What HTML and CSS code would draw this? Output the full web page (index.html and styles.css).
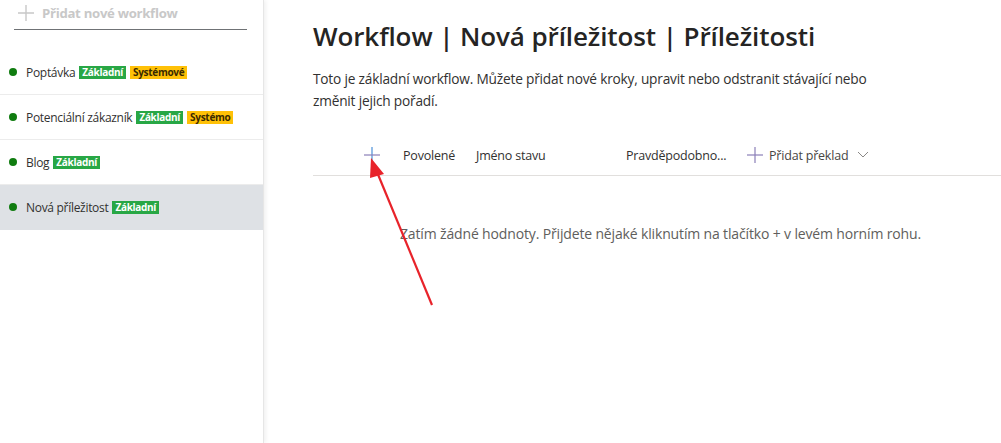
FILE: index.html
```html
<!DOCTYPE html>
<html lang="cs">
<head>
    <meta charset="UTF-8">
    <meta name="viewport" content="width=device-width, initial-scale=1.0">
    <title>Workflow</title>
    <link rel="stylesheet" href="styles.css">
</head>
<body>
    <aside class="sidebar">
        <div class="new-workflow">
            <svg class="plus-icon" width="16" height="16" viewBox="0 0 16 16"><path d="M8 0v16M0 8h16" stroke="#c8c8c8" stroke-width="1.4"/></svg>
            <span>Přidat nové workflow</span>
        </div>
        <ul class="workflow-list">
            <li><span class="dot"></span>Poptávka <span class="badge basic">Základní</span> <span class="badge system">Systémové</span></li>
            <li><span class="dot"></span>Potenciální zákazník <span class="badge basic">Základní</span> <span class="badge system">Systémo</span></li>
            <li><span class="dot"></span>Blog <span class="badge basic">Základní</span></li>
            <li class="active"><span class="dot"></span>Nová příležitost <span class="badge basic">Základní</span></li>
        </ul>
    </aside>
    <main class="content">
        <h1>Workflow | Nová příležitost | Příležitosti</h1>
        <p class="description">Toto je základní workflow. Můžete přidat nové kroky, upravit nebo odstranit stávající nebo změnit jejich pořadí.</p>
        <div class="table-head">
            <span class="col-add"><svg width="16" height="16" viewBox="0 0 16 16"><path d="M8 0v16" stroke="#4a90d9" stroke-width="1.2"/><path d="M0 8h16" stroke="#8a7fb8" stroke-width="1.2"/></svg></span>
            <span class="col-enabled">Povolené</span>
            <span class="col-name">Jméno stavu</span>
            <span class="col-prob">Pravděpodobno...</span>
            <span class="col-translate">
                <svg width="16" height="16" viewBox="0 0 16 16"><path d="M8 0v16" stroke="#8a7fb8" stroke-width="1.2"/><path d="M0 8h16" stroke="#8a7fb8" stroke-width="1.2"/></svg>
                Přidat překlad
                <svg class="chevron" width="12" height="8" viewBox="0 0 12 8"><path d="M1 1l5 5 5-5" fill="none" stroke="#8a8886" stroke-width="1"/></svg>
            </span>
        </div>
        <p class="empty">Zatím žádné hodnoty. Přijdete nějaké kliknutím na tlačítko + v levém horním rohu.</p>
    </main>
    <svg class="arrow" width="1001" height="443" viewBox="0 0 1001 443">
        <path d="M432 305L377 172" stroke="#e8232a" stroke-width="2.2" fill="none"/>
        <path d="M371 158L384 174L370 178Z" fill="#e8232a"/>
    </svg>
</body>
</html>
```

FILE: styles.css
```css
body {
    margin: 0;
    font-family: "Open Sans", "Noto Sans", sans-serif;
    color: #323130;
    background: #fff;
    display: flex;
    height: 443px;
    overflow: hidden;
}

.sidebar {
    width: 263px;
    flex-shrink: 0;
    border-right: 1px solid #e6e6e6;
    box-shadow: 2px 0 4px rgba(0, 0, 0, 0.06);
}

.new-workflow {
    display: flex;
    align-items: center;
    gap: 8px;
    margin: 0 16px 0 14px;
    padding: 4px 0 7px 4px;
    border-bottom: 1px solid #6f7275;
    color: #c8c8c8;
    font-weight: 700;
    font-size: 13.2px;
    letter-spacing: -0.3px;
}

.workflow-list {
    list-style: none;
    margin: 20px 0 0;
    padding: 0;
}

.workflow-list li {
    display: flex;
    align-items: center;
    height: 44px;
    padding-left: 9px;
    border-bottom: 1px solid #ececec;
    font-size: 12px;
    letter-spacing: -0.3px;
    white-space: nowrap;
}

.workflow-list li.active {
    background: #dee1e5;
    border-bottom-color: transparent;
}

.dot {
    width: 8px;
    height: 8px;
    border-radius: 50%;
    background: #107c10;
    margin-right: 9px;
}

.badge {
    font-size: 10px;
    font-weight: 700;
    line-height: 13px;
    padding: 0 3px;
    margin-left: 4px;
    letter-spacing: -0.3px;
}

.badge.basic {
    background: #28a745;
    color: #fff;
}

.badge.system {
    background: #ffc107;
    color: #3a2a00;
}

.content {
    flex: 1;
    padding-left: 49px;
}

h1 {
    margin: 18px 0 0;
    font-size: 26px;
    font-weight: 600;
    letter-spacing: -0.1px;
    color: #252423;
}

.description {
    width: 570px;
    margin: 14px 0 0;
    font-size: 13.7px;
    line-height: 22px;
    letter-spacing: -0.2px;
}

.table-head {
    display: flex;
    align-items: center;
    height: 40px;
    margin-top: 23px;
    border-bottom: 1px solid #e1dfdd;
    font-size: 12.5px;
    letter-spacing: -0.2px;
}

.table-head svg {
    display: block;
}

.col-add {
    width: 39px;
    padding-left: 51px;
}

.col-enabled {
    width: 73px;
}

.col-name {
    width: 150px;
}

.col-prob {
    width: 121px;
}

.col-translate {
    display: flex;
    align-items: center;
    gap: 6px;
    color: #484644;
}

.chevron {
    margin-left: 3px;
}

.empty {
    margin: 48px 0 0 87px;
    font-size: 14px;
    color: #605e5c;
    letter-spacing: -0.15px;
}

.arrow {
    position: absolute;
    top: 0;
    left: 0;
    pointer-events: none;
}
```
